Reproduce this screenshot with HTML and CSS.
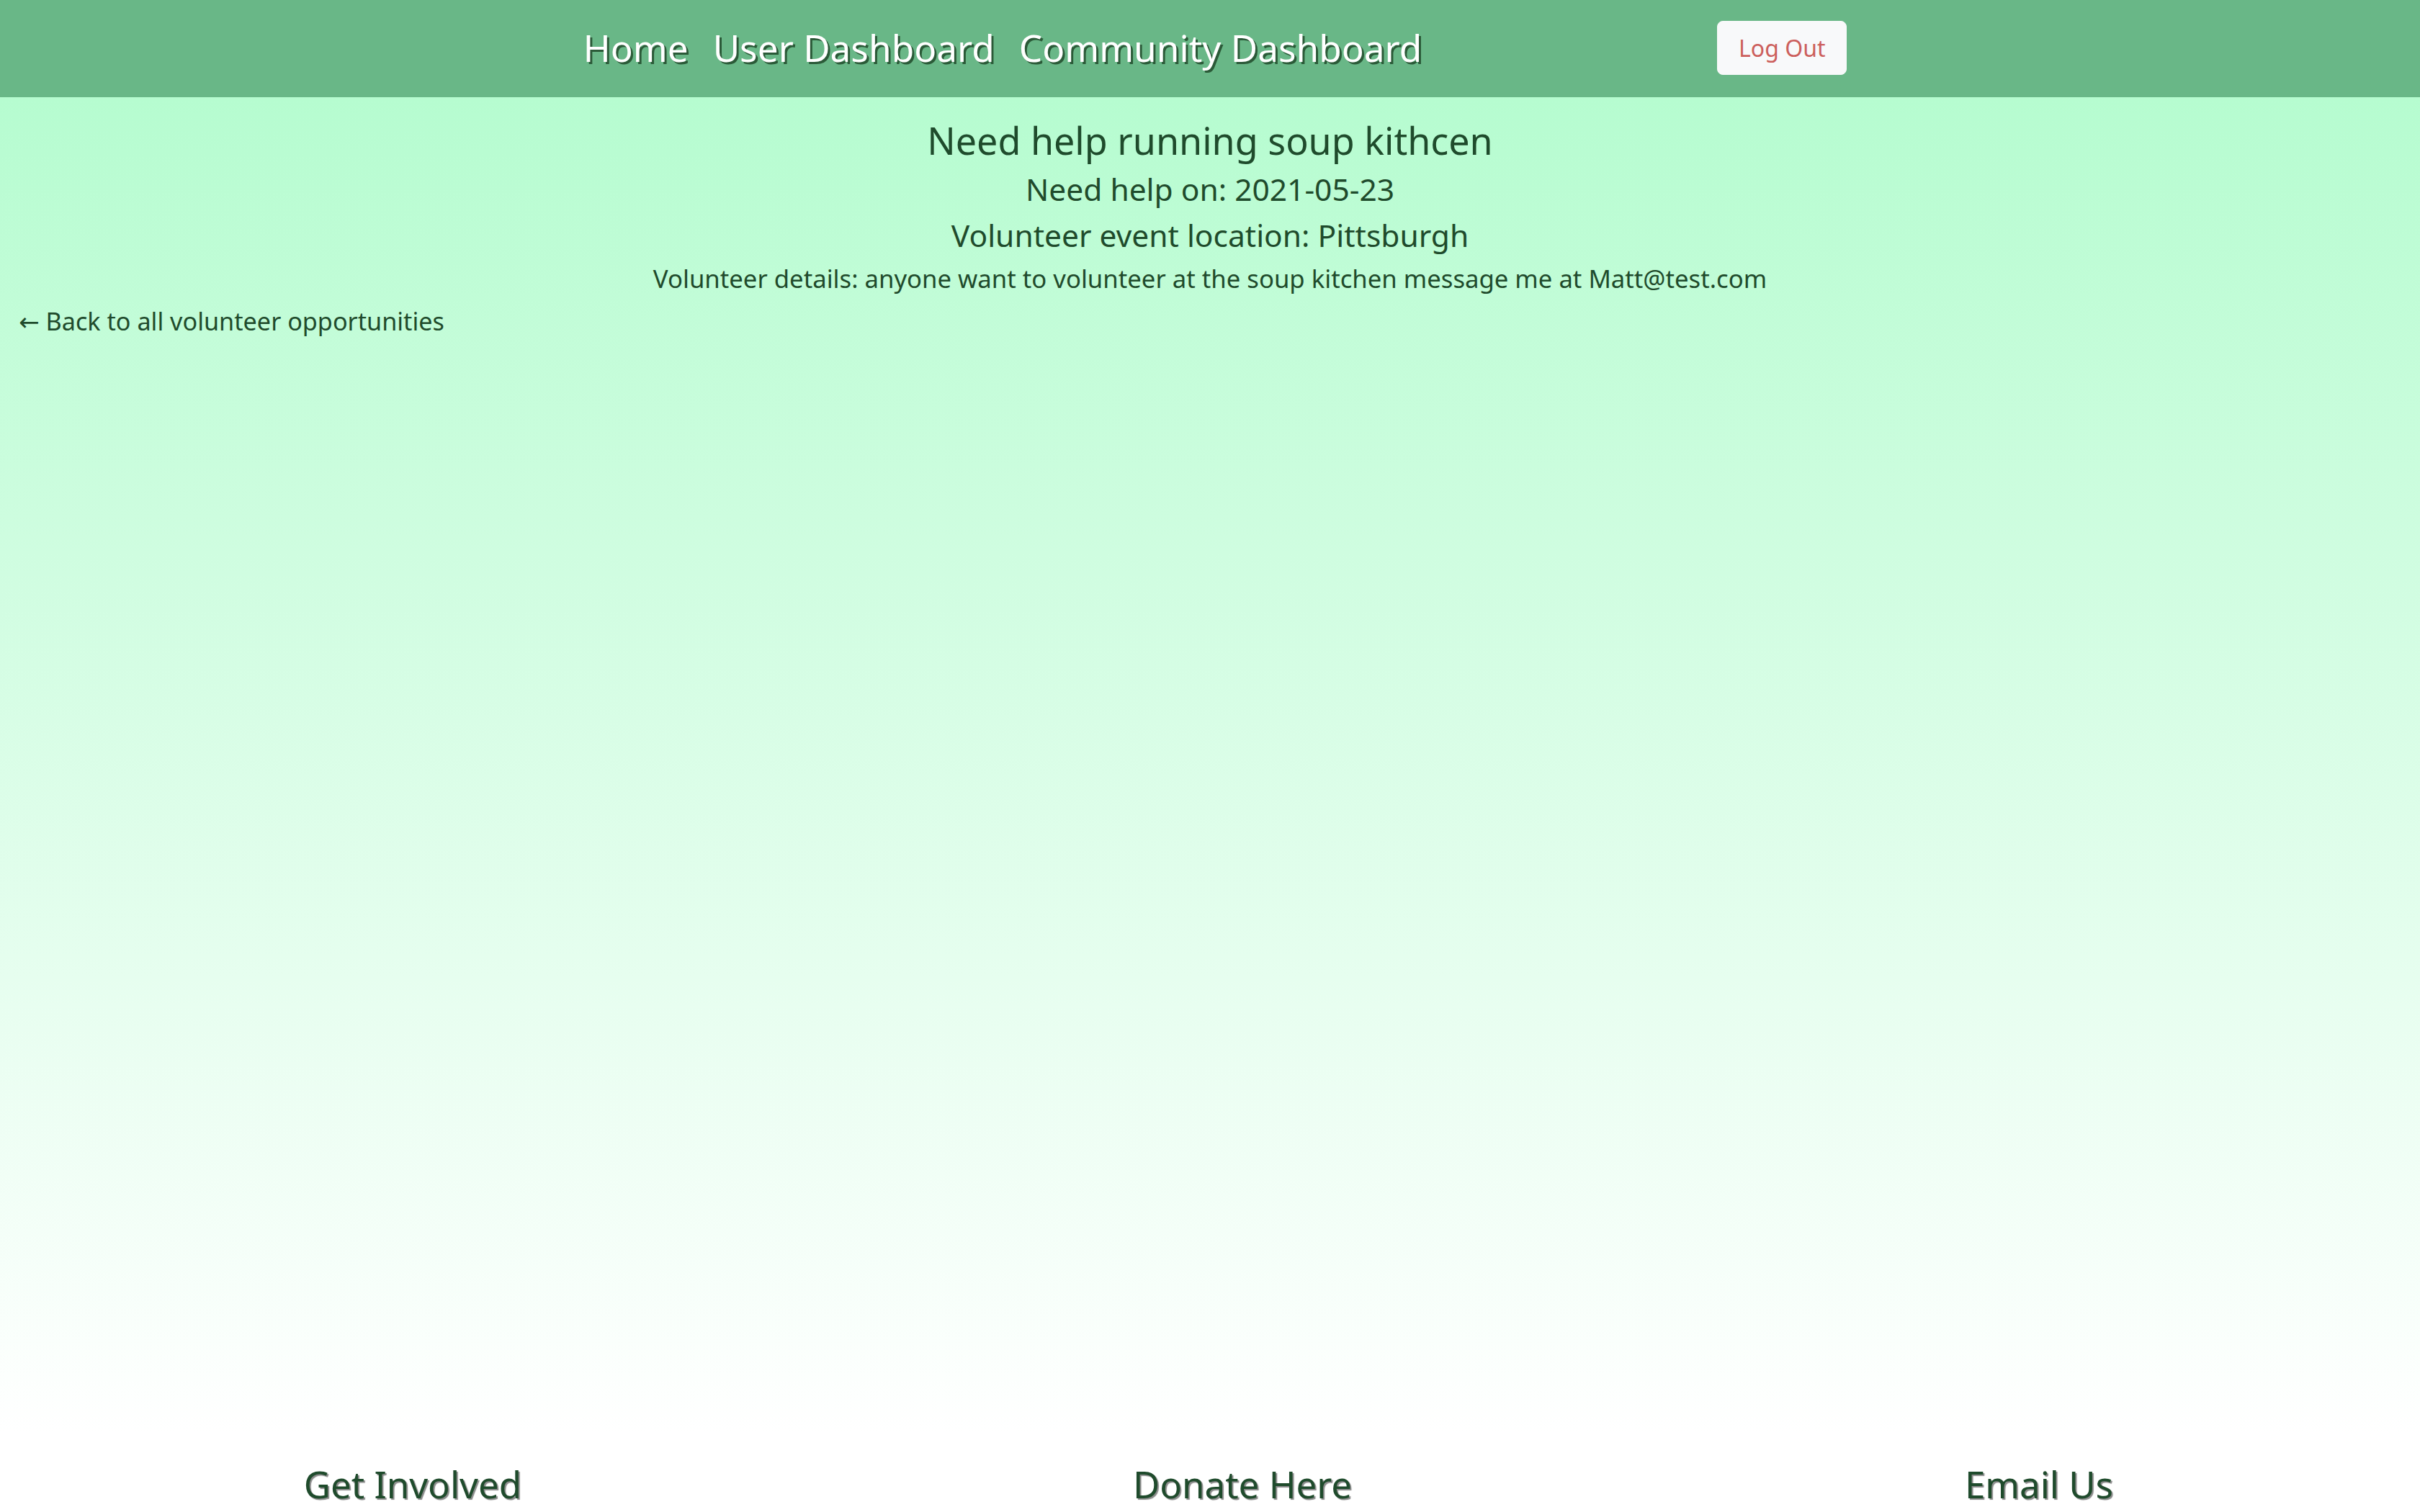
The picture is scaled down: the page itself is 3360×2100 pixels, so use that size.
FILE: index.html
```html
<!DOCTYPE html>
<html lang="en">
<head>
<meta charset="utf-8">
<title>Volunteer opportunity</title>
<link rel="stylesheet" href="styles.css">
</head>
<body>
<nav class="navbar">
  <div class="nav-links">
    <a class="nav-link" href="#">Home</a>
    <a class="nav-link" href="#">User Dashboard</a>
    <a class="nav-link" href="#">Community Dashboard</a>
  </div>
  <button class="logout">Log Out</button>
</nav>
<main class="main">
  <section class="event">
    <h1 class="event-title">Need help running soup kithcen</h1>
    <h2 class="event-sub">Need help on: 2021-05-23</h2>
    <h2 class="event-sub">Volunteer event location: Pittsburgh</h2>
    <p class="event-details">Volunteer details: anyone want to volunteer at the soup kitchen message me at Matt@test.com</p>
  </section>
  <a class="back-link" href="#">← Back to all volunteer opportunities</a>
</main>
<footer class="footer">
  <div class="footer-col col-1"><h3 class="footer-heading">Get Involved</h3></div>
  <div class="footer-col col-2"><h3 class="footer-heading">Donate Here</h3></div>
  <div class="footer-col col-3"><h3 class="footer-heading">Email Us</h3></div>
</footer>
</body>
</html>
```
FILE: styles.css
```css
html, body {
  margin: 0;
  padding: 0;
}
body {
  font-family: "Noto Sans", "DejaVu Sans", sans-serif;
  color: #1f4b2c;
  background: #ffffff;
}
.navbar {
  height: 135px;
  background: #69b787;
  display: flex;
  align-items: center;
  justify-content: center;
  gap: 410px;
  padding-left: 14px;
  box-sizing: border-box;
}
.nav-links {
  display: flex;
  gap: 34px;
  margin-top: -4px;
}
.nav-link {
  color: #ffffff;
  text-decoration: none;
  font-size: 51.3px;
  text-shadow: 3px 3px 0 #2b5a38;
}
.logout {
  width: 180px;
  height: 75px;
  margin-top: -3px;
  background: #f8f9fa;
  border: 1px solid #f8f9fa;
  border-radius: 8px;
  color: #cc5f5c;
  font-family: inherit;
  font-size: 32px;
  padding: 0;
}
.main {
  min-height: 1855px;
  background: linear-gradient(to bottom, #b6fcd0 0%, #ffffff 100%);
  padding-top: 24px;
  box-sizing: border-box;
}
.event {
  text-align: center;
}
.event-title {
  margin: 0;
  font-weight: 400;
  font-size: 52px;
  line-height: 72px;
}
.event-sub {
  margin: 0;
  font-weight: 400;
  font-size: 42.5px;
  line-height: 64px;
}
.event-details {
  margin: 0;
  font-size: 34.7px;
  line-height: 56px;
}
.back-link {
  display: inline-block;
  margin-left: 26px;
  font-size: 34.2px;
  line-height: 62px;
  color: #1f4b2c;
  text-decoration: none;
}
.footer {
  display: grid;
  grid-template-columns: 1fr 1fr 1fr;
  padding-top: 31px;
}
.footer-col {
  text-align: center;
}
.col-1 { padding-left: 26px; }
.col-2 { padding-left: 90px; }
.col-3 { padding-left: 62px; }
.footer-heading {
  margin: 0;
  font-weight: 400;
  font-size: 51px;
  line-height: 80px;
  text-shadow: 2px 2px 1px #8a8a8a;
}
```
